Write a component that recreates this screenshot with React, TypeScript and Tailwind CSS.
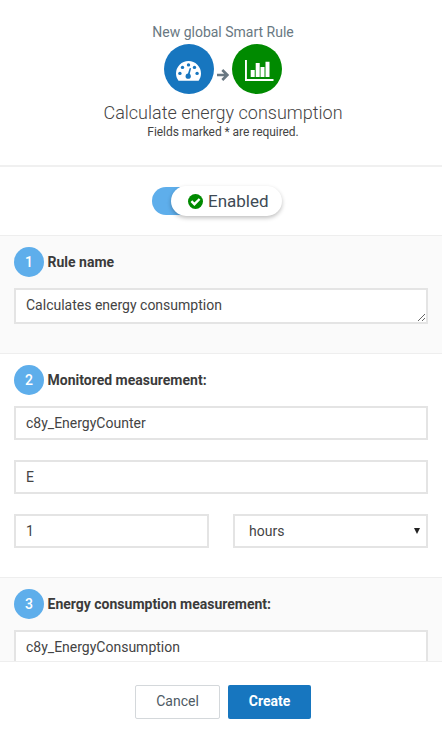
import type { ReactNode } from 'react';

function Gauge() {
  return (
    <svg className="mt-1 mr-px block" width="25" height="20" viewBox="0 0 25 20">
      <path
        fill="#fff"
        d="M2.3 19.4C.8 17.4 0 15 0 12.5a12.5 12.5 0 0 1 25 0c0 2.5-.8 4.9-2.2 6.9-.2.3-.5.4-.8.4H3.1c-.3 0-.6-.1-.8-.4Z"
      />
      <g fill="#1776bf">
        <circle cx="3.9" cy="12.4" r="1.7" />
        <circle cx="6.5" cy="6.4" r="1.7" />
        <circle cx="12.5" cy="3.9" r="1.7" />
        <circle cx="18.5" cy="6.4" r="1.7" />
        <circle cx="21.1" cy="12.4" r="1.7" />
        <circle cx="12.2" cy="15.2" r="2.6" />
        <path d="m11.7 13.5 1.8-6 c.3-.9 1.6-.6 1.4.4l-1.4 6Z" />
      </g>
    </svg>
  );
}

function Chart() {
  return (
    <svg className="mt-0.5 ml-[5px] block" width="29" height="22" viewBox="0 0 29 22">
      <path
        fill="#fff"
        d="M0 1h1.9v18.9H28.5V22H0ZM5.7 11h4v7h-4ZM10.7 4h4v14h-4ZM15.5 8h4v10h-4ZM20.5 2.7h4V18h-4Z"
      />
    </svg>
  );
}

function Arrow() {
  return (
    <svg className="mt-[11px] block" width="12" height="12" viewBox="0 0 12 12">
      <path d="M0 6h10M5.3 1 10.3 6l-5 5" fill="none" stroke="#697882" strokeWidth="2.6" />
    </svg>
  );
}

function Check() {
  return (
    <svg width="15" height="15" viewBox="0 0 15 15">
      <circle cx="7.5" cy="7.5" r="7.5" fill="#008a00" />
      <path d="m3.4 7.2 3 3 5.2-5.2" fill="none" stroke="#fff" strokeWidth="2.4" />
    </svg>
  );
}

function Step({ n, title, children }: { n: number; title: string; children: ReactNode }) {
  return (
    <section className="shrink-0 border-t border-[#eeeeee] px-3.5 pt-[11px] pb-[29px] odd:bg-[#fafafa]">
      <h2 className="flex h-[30px] items-center gap-[3.5px] text-sm font-bold text-[#3b3b3b]">
        <span className="flex size-[30px] items-center justify-center rounded-full bg-[#5eaeeb] font-medium text-white">
          {n}
        </span>
        {title}
      </h2>
      {children}
    </section>
  );
}

const field =
  'block h-[34px] w-full rounded-none border-2 border-[#e4e4e4] bg-white px-2.5 text-sm text-[#444444] outline-none';

export default function App() {
  return (
    <main className="flex h-[737px] w-[442px] flex-col overflow-hidden bg-white font-['Roboto',sans-serif]">
      <header className="flex h-[167px] shrink-0 flex-col items-center border-b-2 border-[#f0f0f0] pt-[22px] pl-1">
        <p className="h-[22px] text-sm leading-5 text-[#697882]">New global Smart Rule</p>
        <div className="flex items-center">
          <span className="flex size-[50px] items-center justify-center rounded-full bg-[#1776bf]">
            <Gauge />
          </span>
          <span className="flex w-[18px] justify-center">
            <Arrow />
          </span>
          <span className="flex size-[50px] items-center justify-center rounded-full bg-[#008a00]">
            <Chart />
          </span>
        </div>
        <h1 className="mt-[9px] text-lg leading-5 font-light text-[#444444]">Calculate energy consumption</h1>
        <p className="mt-px text-xs leading-4 tracking-[-0.05px] text-[#444444]">Fields marked * are required.</p>
      </header>

      <div className="flex h-[68px] shrink-0 items-start justify-center pt-[19px] pr-2">
        <div className="mt-px flex h-7 w-[130px] justify-end rounded-full bg-gradient-to-r from-[#5eaeeb] from-50% to-white to-50%">
          <div className="-mt-px flex h-[30px] w-[111px] items-center rounded-full bg-white pl-[17px] text-[17px] text-[#3e4a55] shadow-[0_2px_4px_rgba(0,0,0,0.25)]">
            <Check />
            <span className="mt-px ml-[5px]">Enabled</span>
          </div>
        </div>
      </div>

      <div className="flex min-h-0 flex-1 flex-col overflow-hidden">
        <Step n={1} title="Rule name">
          <textarea
            className="mt-[11px] block h-9 w-full resize rounded-none border-2 border-[#e4e4e4] bg-white px-2.5 py-[5px] text-sm leading-5 text-[#444444] outline-none"
            defaultValue="Calculates energy consumption"
          />
        </Step>
        <Step n={2} title="Monitored measurement:">
          <div className="mt-[11px] grid grid-cols-2 gap-x-6 gap-y-5">
            <input className={`${field} col-span-2`} defaultValue="c8y_EnergyCounter" />
            <input className={`${field} col-span-2`} defaultValue="E" />
            <input className={field} defaultValue="1" />
            <button className={`${field} flex items-center justify-between pr-1.5 pl-3.5`}>
              <span>hours</span>
              <svg className="mb-px" width="6" height="6" viewBox="0 0 6 6">
                <path d="M0 0h6L3 6Z" fill="#222" />
              </svg>
            </button>
          </div>
        </Step>
        <Step n={3} title="Energy consumption measurement:">
          <input className={`${field} mt-[11px]`} defaultValue="c8y_EnergyConsumption" />
        </Step>
      </div>

      <footer className="flex h-[76px] shrink-0 justify-center gap-2 border-t border-[#eeeeee] pt-[23px] pl-1 text-sm">
        <button className="h-[34px] w-[85px] rounded-xs border border-[#d4d8db] bg-white pb-0.5 text-[#4e5a64]">Cancel</button>
        <button className="h-[34px] w-[83px] rounded-xs bg-[#1776bf] pb-0.5 font-bold text-white">Create</button>
      </footer>
    </main>
  );
}
